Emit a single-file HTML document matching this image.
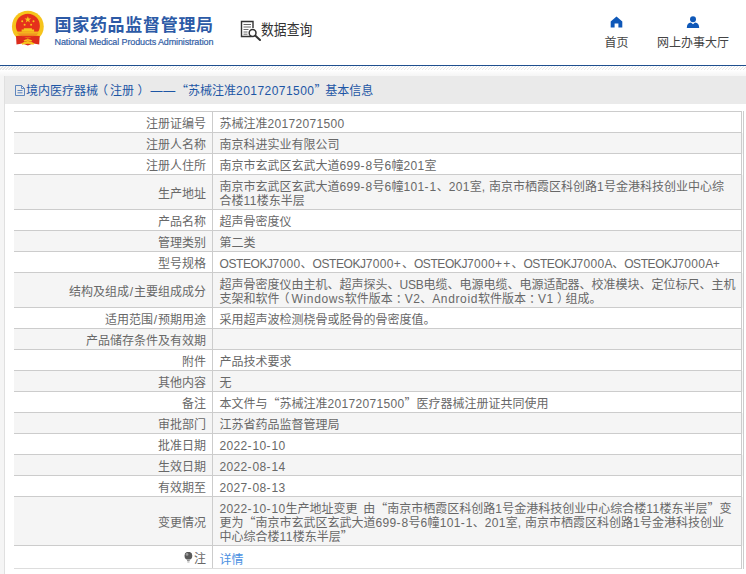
<!DOCTYPE html>
<html lang="zh-CN">
<head>
<meta charset="utf-8">
<title>国家药品监督管理局 数据查询</title>
<style>
html,body{margin:0;padding:0;background:#fff;}
body{width:746px;height:574px;overflow:hidden;position:relative;font-family:"Liberation Sans","Noto Sans CJK SC",sans-serif;font-size:12px;color:#555;}
.abs{position:absolute;white-space:nowrap;}
#emblem{left:9px;top:7px;width:38px;height:40px;}
#title{left:54.5px;top:13.5px;font-size:17px;line-height:24px;font-weight:bold;color:#2c5aa6;letter-spacing:.7px;}
#sub{left:54.5px;top:35.8px;font-size:9px;line-height:12px;color:#3360a6;letter-spacing:-.12px;-webkit-text-stroke:.2px #3360a6;}
#qicon{left:239px;top:19px;width:24px;height:23px;}
#qtext{left:260.6px;top:18.6px;font-size:15px;line-height:22px;color:#333;transform:scaleX(.855);transform-origin:0 0;}
.nav{font-size:12px;line-height:16px;color:#444;text-align:center;}
#blueline{left:0;top:65px;width:746px;height:1px;background:#1f4f8f;}
#hatch{left:0;top:66px;width:746px;height:4px;opacity:.85;background:repeating-linear-gradient(135deg,#e3e3e3 0,#e3e3e3 .75px,#fff .75px,#fff 2.12px);}
#pagebg{left:0;top:70px;width:746px;height:510px;background:linear-gradient(#fff,#f5f5f5 6px);}
#panel{left:4px;top:76px;width:760px;height:520px;border-left:1px solid #e0e0e0;background:#fff;}
#phead{left:5px;top:76px;width:741px;height:28px;background:#eaeaea;}
#ptitle{left:26px;top:82.5px;font-size:12px;line-height:16px;color:#1d56a5;}
#docicon{left:15px;top:85px;width:10px;height:11px;}
table{position:absolute;left:14px;top:111px;width:730px;border-collapse:collapse;table-layout:fixed;border-top:1px solid #ccc;}
th,td{font-size:12px;line-height:14px;padding:5px 0 1px;border-bottom:1px solid #ccc;font-weight:normal;vertical-align:middle;color:#686868;}
th{width:192px;text-align:right;padding-right:6px;border-right:1px solid #ccc;}
td{text-align:left;padding-left:6.5px;word-spacing:.6px;padding-right:0;white-space:nowrap;border-right:3px double #ccc;}
tr:nth-child(even) th,tr:nth-child(even) td{background:#f5f5f5;}
tr.last th,tr.last td{padding:6px 0 2px;height:14px;border-bottom-color:#ddd;}
tr.last th{padding-right:6px;}tr.last td{padding-left:6.5px;}
tr.last a{position:relative;top:1px;}
a{color:#4a90e2;text-decoration:none;}
.q{font-family:"Noto Sans CJK SC",sans-serif;line-height:0;}
.dash{margin-left:4.5px;letter-spacing:.75px;}
.qr{margin-right:-1.2px;}
.n{letter-spacing:.33px;}
.h{letter-spacing:1px;}
.u{letter-spacing:-.42px;}
.ua{letter-spacing:-.4px;}
.p{letter-spacing:1.18px;}
.usb{letter-spacing:-.2px;}
.win{letter-spacing:.65px;}
.cl{position:relative;left:3px;}
.sp{letter-spacing:1.7px;}
.and{letter-spacing:.65px;}
.sl{margin:0 .85px;}
.lp{position:relative;left:-2px;}
.rp{position:relative;left:3.5px;}
#ptitle .n{letter-spacing:.45px;}
.bulb{width:9px;height:11px;vertical-align:0;margin-left:.8px;margin-right:1.2px;}
</style>
</head>
<body>
<svg id="emblem" class="abs" viewBox="0 0 38 40">
<circle cx="18.85" cy="19.6" r="15.9" fill="#f6c41c"/>
<path d="M7 29 L11.5 28.3 L18.85 31.5 L26.2 28.3 L30.7 29 L30.2 37.6 L24.5 36.4 L18.85 38.6 L13.2 36.4 L7.5 37.6 Z" fill="#dc2c1c"/>
<circle cx="18.85" cy="18.8" r="12" fill="#e5301c"/>
<path d="M7 24.6 h23.7 v4 h-23.7z" fill="#f6c41c"/>
<path d="M8.5 26.2 h20.7 M9.5 27.6 h18.7" stroke="#e8602a" stroke-width=".5" fill="none"/>
<path d="M12.6 24.8 v-2.2 h2.2 v-1.4 h8.1 v1.4 h2.2 v2.2z" fill="#f6c41c"/>
<path d="M12.2 36.6 q6.6 -5.4 13.3 0 l-1.2 1.2 q-5.4 -2 -10.9 0z" fill="#f6c41c"/>
<path d="M14.5 33.6 q4.3 -3 8.7 0 l-.8 1 q-3.5 -1.8 -7.1 0z" fill="#f6c41c"/>
<polygon points="18.85,9.2 19.7,11.6 22.2,11.6 20.2,13.1 20.9,15.5 18.85,14.1 16.8,15.5 17.5,13.1 15.5,11.6 18,11.6" fill="#f6c41c"/>
<circle cx="13.2" cy="14.2" r="1" fill="#f6c41c"/><circle cx="24.5" cy="14.2" r="1" fill="#f6c41c"/>
<circle cx="15.6" cy="17.8" r="1" fill="#f6c41c"/><circle cx="22.1" cy="17.8" r="1" fill="#f6c41c"/>
</svg>
<div id="title" class="abs">国家药品监督管理局</div>
<div id="sub" class="abs">National Medical Products Administration</div>
<svg id="qicon" class="abs" viewBox="0 0 24 23" fill="none" stroke="#333" stroke-width="1.4">
<path d="M12.5 17.5 H2.5 V2.5 H14 V9"/>
<path d="M4.5 5.5 H12 M4.5 8 H12 M4.5 10.5 H9.5 M4.5 13 H8.5 M4.5 15.2 H8.5" stroke-width="1" stroke="#6b6b6b"/>
<circle cx="13.6" cy="14" r="3.4" stroke-width="1.5"/>
<path d="M16.2 16.6 L21 21" stroke-width="2" stroke-linecap="round"/>
</svg>
<div id="qtext" class="abs">数据查询</div>
<svg class="abs" style="left:610px;top:16px;width:13px;height:12px" viewBox="0 0 13 12"><path d="M6.5 0.5 L12.3 5.6 V11.5 H8.4 V7.6 H4.6 V11.5 H0.7 V5.6 Z" fill="#0f58b8"/></svg>
<div class="abs nav" style="left:596px;top:35px;width:41px;">首页</div>
<svg class="abs" style="left:686px;top:16px;width:14px;height:12px" viewBox="0 0 14 12"><circle cx="7" cy="3.2" r="3" fill="#0f58b8"/><path d="M0.8 12 Q0.8 7 5 6.6 L7 8.2 L9 6.6 Q13.2 7 13.2 12 Z" fill="#0f58b8"/></svg>
<div class="abs nav" style="left:653px;top:35px;width:80px;">网上办事大厅</div>
<div id="blueline" class="abs"></div>
<div id="hatch" class="abs"></div>
<div id="pagebg" class="abs"></div>
<div id="panel" class="abs"></div>
<div id="phead" class="abs"></div>
<svg id="docicon" class="abs" viewBox="0 0 10 11" fill="none" stroke="#4474b6" stroke-width=".85"><path d="M0.5 0.5 H6.5 L9.5 3.5 V10.5 H0.5 Z"/><path d="M6.5 0.5 V3.5 H9.5" stroke-width=".8"/><path d="M2.5 5.5 H7.5 M2.5 7.8 H7.5"/></svg>
<div id="ptitle" class="abs">境内医疗器械<span class="lp">（</span>注册<span class="rp">）</span><span class="dash">——</span><span class="q">“</span>苏械注准<span class="n">20172071500</span><span class="q qr">”</span>基本信息</div>
<table>
<tr><th>注册证编号</th><td>苏械注准<span class="n">20172071500</span></td></tr>
<tr><th>注册人名称</th><td>南京科进实业有限公司</td></tr>
<tr><th>注册人住所</th><td>南京市玄武区玄武大道<span class="n">699</span><span class="h">-</span><span class="n">8</span>号<span class="n">6</span>幢<span class="n">201</span>室</td></tr>
<tr><th>生产地址</th><td>南京市玄武区玄武大道<span class="n">699</span><span class="h">-</span><span class="n">8</span>号<span class="n">6</span>幢<span class="n">101</span><span class="h">-</span><span class="n">1</span>、<span class="n">201</span>室, 南京市栖霞区科创路<span class="n">1</span>号金港科技创业中心综<br>合楼<span class="n">11</span>楼东半层</td></tr>
<tr><th>产品名称</th><td>超声骨密度仪</td></tr>
<tr><th>管理类别</th><td>第二类</td></tr>
<tr><th>型号规格</th><td><span class="u">OSTEOKJ</span><span class="n">7000</span>、<span class="u">OSTEOKJ</span><span class="n">7000</span><span class="p">+</span>、<span class="u">OSTEOKJ</span><span class="n">7000</span><span class="p">++</span>、<span class="u">OSTEOKJ</span><span class="n">7000</span><span class="ua">A</span>、<span class="u">OSTEOKJ</span><span class="n">7000</span><span class="ua">A</span><span class="p">+</span></td></tr>
<tr><th>结构及组成<span class="sl">/</span>主要组成成分</th><td>超声骨密度仪由主机、超声探头、<span class="usb">USB</span>电缆、电源电缆、电源适配器、校准模块、定位标尺、主机<br>支架和软件<span class="lp">（</span><span class="win">Windows</span>软件版本<span class="cl">：</span><span class="n">V2</span>、<span class="and">Android</span>软件版本<span class="cl">：</span><span class="n">V1</span><span class="rp">）</span>组成。</td></tr>
<tr><th>适用范围<span class="sl">/</span>预期用途</th><td>采用超声波检测桡骨或胫骨的骨密度值。</td></tr>
<tr><th>产品储存条件及有效期</th><td></td></tr>
<tr><th>附件</th><td>产品技术要求</td></tr>
<tr><th>其他内容</th><td>无</td></tr>
<tr><th>备注</th><td>本文件与<span class="q">“</span>苏械注准<span class="n">20172071500</span><span class="q">”</span>医疗器械注册证共同使用</td></tr>
<tr><th>审批部门</th><td>江苏省药品监督管理局</td></tr>
<tr><th>批准日期</th><td><span class="n">2022</span><span class="h">-</span><span class="n">10</span><span class="h">-</span><span class="n">10</span></td></tr>
<tr><th>生效日期</th><td><span class="n">2022</span><span class="h">-</span><span class="n">08</span><span class="h">-</span><span class="n">14</span></td></tr>
<tr><th>有效期至</th><td><span class="n">2027</span><span class="h">-</span><span class="n">08</span><span class="h">-</span><span class="n">13</span></td></tr>
<tr><th>变更情况</th><td><span class="n">2022</span><span class="h">-</span><span class="n">10</span><span class="h">-</span><span class="n">10</span>生产地址变更<span class="sp"> </span>由<span class="q">“</span>南京市栖霞区科创路<span class="n">1</span>号金港科技创业中心综合楼<span class="n">11</span>楼东半层<span class="q">”</span>变<br>更为<span class="q">“</span>南京市玄武区玄武大道<span class="n">699</span><span class="h">-</span><span class="n">8</span>号<span class="n">6</span>幢<span class="n">101</span><span class="h">-</span><span class="n">1</span>、<span class="n">201</span>室, 南京市栖霞区科创路<span class="n">1</span>号金港科技创业<br>中心综合楼<span class="n">11</span>楼东半层<span class="q">”</span></td></tr>
<tr class="last"><th><svg class="bulb" viewBox="0 0 9 11"><circle cx="4.4" cy="3.7" r="3.9" fill="#595959"/><circle cx="3" cy="2.4" r="1.4" fill="#9a9a9a"/><path d="M3 7.8h2.8v1h-2.8z" fill="#777"/><path d="M3.3 9.5h2.2v.9h-2.2z" fill="#999"/></svg>注</th><td><a>详情</a></td></tr>
</table>
</body>
</html>
